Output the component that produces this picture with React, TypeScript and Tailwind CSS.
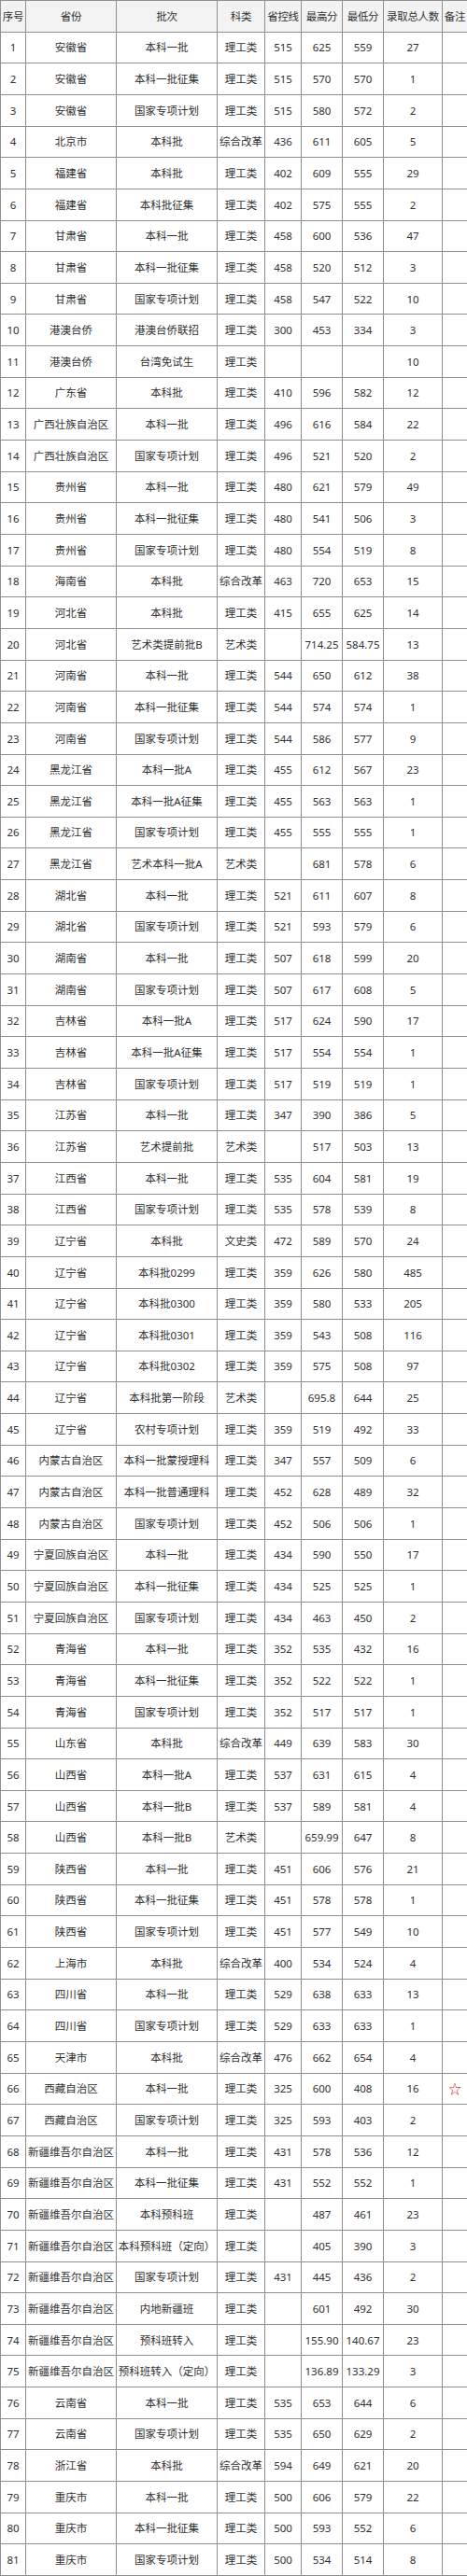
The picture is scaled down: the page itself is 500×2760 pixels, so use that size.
// Admission scores table: one row per province + batch
const head = ['序号', '省份', '批次', '科类', '省控线', '最高分', '最低分', '录取总人数', '备注']

const rows: string[][] = [
  ['安徽省', '本科一批', '理工类', '515', '625', '559', '27'],
  ['安徽省', '本科一批征集', '理工类', '515', '570', '570', '1'],
  ['安徽省', '国家专项计划', '理工类', '515', '580', '572', '2'],
  ['北京市', '本科批', '综合改革', '436', '611', '605', '5'],
  ['福建省', '本科批', '理工类', '402', '609', '555', '29'],
  ['福建省', '本科批征集', '理工类', '402', '575', '555', '2'],
  ['甘肃省', '本科一批', '理工类', '458', '600', '536', '47'],
  ['甘肃省', '本科一批征集', '理工类', '458', '520', '512', '3'],
  ['甘肃省', '国家专项计划', '理工类', '458', '547', '522', '10'],
  ['港澳台侨', '港澳台侨联招', '理工类', '300', '453', '334', '3'],
  ['港澳台侨', '台湾免试生', '理工类', '', '', '', '10'],
  ['广东省', '本科批', '理工类', '410', '596', '582', '12'],
  ['广西壮族自治区', '本科一批', '理工类', '496', '616', '584', '22'],
  ['广西壮族自治区', '国家专项计划', '理工类', '496', '521', '520', '2'],
  ['贵州省', '本科一批', '理工类', '480', '621', '579', '49'],
  ['贵州省', '本科一批征集', '理工类', '480', '541', '506', '3'],
  ['贵州省', '国家专项计划', '理工类', '480', '554', '519', '8'],
  ['海南省', '本科批', '综合改革', '463', '720', '653', '15'],
  ['河北省', '本科批', '理工类', '415', '655', '625', '14'],
  ['河北省', '艺术类提前批B', '艺术类', '', '714.25', '584.75', '13'],
  ['河南省', '本科一批', '理工类', '544', '650', '612', '38'],
  ['河南省', '本科一批征集', '理工类', '544', '574', '574', '1'],
  ['河南省', '国家专项计划', '理工类', '544', '586', '577', '9'],
  ['黑龙江省', '本科一批A', '理工类', '455', '612', '567', '23'],
  ['黑龙江省', '本科一批A征集', '理工类', '455', '563', '563', '1'],
  ['黑龙江省', '国家专项计划', '理工类', '455', '555', '555', '1'],
  ['黑龙江省', '艺术本科一批A', '艺术类', '', '681', '578', '6'],
  ['湖北省', '本科一批', '理工类', '521', '611', '607', '8'],
  ['湖北省', '国家专项计划', '理工类', '521', '593', '579', '6'],
  ['湖南省', '本科一批', '理工类', '507', '618', '599', '20'],
  ['湖南省', '国家专项计划', '理工类', '507', '617', '608', '5'],
  ['吉林省', '本科一批A', '理工类', '517', '624', '590', '17'],
  ['吉林省', '本科一批A征集', '理工类', '517', '554', '554', '1'],
  ['吉林省', '国家专项计划', '理工类', '517', '519', '519', '1'],
  ['江苏省', '本科一批', '理工类', '347', '390', '386', '5'],
  ['江苏省', '艺术提前批', '艺术类', '', '517', '503', '13'],
  ['江西省', '本科一批', '理工类', '535', '604', '581', '19'],
  ['江西省', '国家专项计划', '理工类', '535', '578', '539', '8'],
  ['辽宁省', '本科批', '文史类', '472', '589', '570', '24'],
  ['辽宁省', '本科批0299', '理工类', '359', '626', '580', '485'],
  ['辽宁省', '本科批0300', '理工类', '359', '580', '533', '205'],
  ['辽宁省', '本科批0301', '理工类', '359', '543', '508', '116'],
  ['辽宁省', '本科批0302', '理工类', '359', '575', '508', '97'],
  ['辽宁省', '本科批第一阶段', '艺术类', '', '695.8', '644', '25'],
  ['辽宁省', '农村专项计划', '理工类', '359', '519', '492', '33'],
  ['内蒙古自治区', '本科一批蒙授理科', '理工类', '347', '557', '509', '6'],
  ['内蒙古自治区', '本科一批普通理科', '理工类', '452', '628', '489', '32'],
  ['内蒙古自治区', '国家专项计划', '理工类', '452', '506', '506', '1'],
  ['宁夏回族自治区', '本科一批', '理工类', '434', '590', '550', '17'],
  ['宁夏回族自治区', '本科一批征集', '理工类', '434', '525', '525', '1'],
  ['宁夏回族自治区', '国家专项计划', '理工类', '434', '463', '450', '2'],
  ['青海省', '本科一批', '理工类', '352', '535', '432', '16'],
  ['青海省', '本科一批征集', '理工类', '352', '522', '522', '1'],
  ['青海省', '国家专项计划', '理工类', '352', '517', '517', '1'],
  ['山东省', '本科批', '综合改革', '449', '639', '583', '30'],
  ['山西省', '本科一批A', '理工类', '537', '631', '615', '4'],
  ['山西省', '本科一批B', '理工类', '537', '589', '581', '4'],
  ['山西省', '本科一批B', '艺术类', '', '659.99', '647', '8'],
  ['陕西省', '本科一批', '理工类', '451', '606', '576', '21'],
  ['陕西省', '本科一批征集', '理工类', '451', '578', '578', '1'],
  ['陕西省', '国家专项计划', '理工类', '451', '577', '549', '10'],
  ['上海市', '本科批', '综合改革', '400', '534', '524', '4'],
  ['四川省', '本科一批', '理工类', '529', '638', '633', '13'],
  ['四川省', '国家专项计划', '理工类', '529', '633', '633', '1'],
  ['天津市', '本科批', '综合改革', '476', '662', '654', '4'],
  ['西藏自治区', '本科一批', '理工类', '325', '600', '408', '16', '☆'],
  ['西藏自治区', '国家专项计划', '理工类', '325', '593', '403', '2'],
  ['新疆维吾尔自治区', '本科一批', '理工类', '431', '578', '536', '12'],
  ['新疆维吾尔自治区', '本科一批征集', '理工类', '431', '552', '552', '1'],
  ['新疆维吾尔自治区', '本科预科班', '理工类', '', '487', '461', '23'],
  ['新疆维吾尔自治区', '本科预科班（定向）', '理工类', '', '405', '390', '3'],
  ['新疆维吾尔自治区', '国家专项计划', '理工类', '431', '445', '436', '2'],
  ['新疆维吾尔自治区', '内地新疆班', '理工类', '', '601', '492', '30'],
  ['新疆维吾尔自治区', '预科班转入', '理工类', '', '155.90', '140.67', '23'],
  ['新疆维吾尔自治区', '预科班转入（定向）', '理工类', '', '136.89', '133.29', '3'],
  ['云南省', '本科一批', '理工类', '535', '653', '644', '6'],
  ['云南省', '国家专项计划', '理工类', '535', '650', '629', '2'],
  ['浙江省', '本科批', '综合改革', '594', '649', '621', '20'],
  ['重庆市', '本科一批', '理工类', '500', '606', '579', '22'],
  ['重庆市', '本科一批征集', '理工类', '500', '593', '552', '6'],
  ['重庆市', '国家专项计划', '理工类', '500', '534', '514', '8'],
]

const cell =
  'flex items-center justify-center overflow-visible whitespace-nowrap border-r border-b border-[#8f8f8f]'

export default function App() {
  return (
    <div
      className="grid h-[2760px] w-[500px] grid-cols-[27px_97px_108px_51px_39px_44px_44px_63px_27px] grid-rows-[repeat(82,minmax(0,1fr))] border-l border-t border-[#8f8f8f] bg-white text-[11.5px] text-[#303030]"
      style={{ fontFamily: '"Noto Sans", "Noto Sans CJK SC", sans-serif' }}
    >
      {head.map((h) => (
        <div key={h} className={`${cell} bg-[#f3f3f3] tracking-[-0.3px]`}>
          {h}
        </div>
      ))}
      {rows.map((r, i) => {
        const note = r[7] ?? ''
        return [String(i + 1), ...r.slice(0, 7)]
          .map((v, j) => (
            <div key={`${i}-${j}`} className={cell}>
              {v}
            </div>
          ))
          .concat(
            <div key={`${i}-note`} className={`${cell} text-[14px] text-[#d0202a]`}>
              {note}
            </div>,
          )
      })}
    </div>
  )
}
